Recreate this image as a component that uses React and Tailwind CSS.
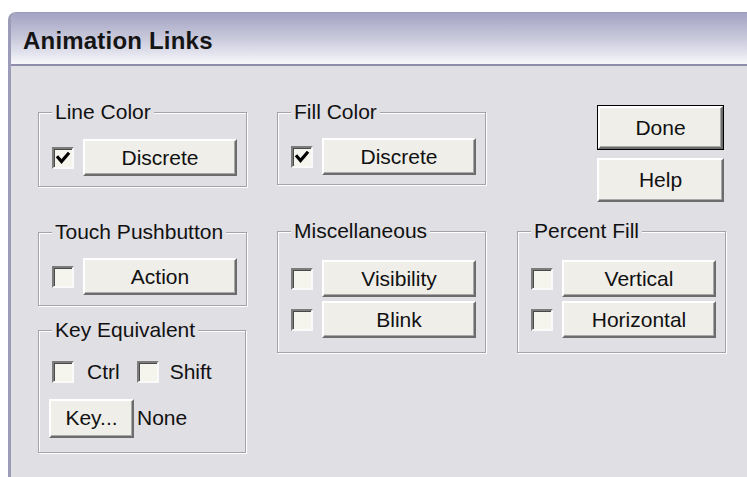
import React from "react";

const face = "bg-[#e0dfe4]";

// raised 3D push button, classic look
function PushButton({ children, className = "", isDefault = false }) {
  const inner = (
    <div className="flex h-full w-full items-center justify-center border-2 border-t-[#ffffff] border-l-[#ffffff] border-b-[#6c6c6c] border-r-[#6c6c6c] bg-[#efeee9] shadow-[inset_-1px_-1px_0_#a8a8a8]">
      {children}
    </div>
  );
  if (isDefault) {
    return <div className={"border-[1.5px] border-black " + className}>{inner}</div>;
  }
  return <div className={className}>{inner}</div>;
}

function CheckBox({ checked = false }) {
  return (
    <div className="flex h-[22px] w-[22px] shrink-0 items-center justify-center border-2 border-t-[#7c7c7c] border-l-[#7c7c7c] border-b-[#fafafa] border-r-[#fafafa] bg-[#f5f5ee] shadow-[inset_1px_1px_0_#4a4a4a]">
      {checked && (
        <svg width="16" height="16" viewBox="0 0 16 16">
          <path d="M3 7.5 L6.5 11.5 L13 4" fill="none" stroke="#000" strokeWidth="3.2" strokeLinecap="square" />
        </svg>
      )}
    </div>
  );
}

function Group({ label, className = "", children }) {
  return (
    <fieldset
      className={
        "w-[208px] border border-[#a3a3a8] pl-[13px] pr-[9px] shadow-[inset_1px_1px_0_#ffffff,1px_1px_0_#ffffff] " +
        className
      }
    >
      <legend className={"px-[3px] leading-[20px] " + face}>{label}</legend>
      {children}
    </fieldset>
  );
}

function Row({ checked, label, className = "" }) {
  return (
    <div className={"flex items-center gap-[9px] " + className}>
      <CheckBox checked={checked} />
      <PushButton className="h-[37px] w-[154px]">{label}</PushButton>
    </div>
  );
}

export default function App() {
  return (
    <div className="h-[477px] w-[747px] overflow-hidden bg-white pl-[8px] pt-[12px] font-['Liberation_Sans',Arial,sans-serif] text-[21px] text-[#111]">
      <div className={"h-full overflow-hidden rounded-tl-[8px] border-l-[3px] border-t border-[#9c9cb8] " + face}>
        {/* title bar */}
        <div className="flex h-[53px] items-center border-b-[2px] border-[#8e8eac] bg-gradient-to-b from-[#a3a3c3] via-[#c9c9dc] to-[#f7f7fb] pl-[12px] pt-[4px]">
          <span className="text-[24px] font-bold tracking-[0.2px] text-[#151515]">Animation Links</span>
        </div>

        {/* dialog body */}
        <div className="flex items-start pl-[27px] pt-[36px]">
          <div className="flex w-[208px] flex-col">
            <Group label="Line Color" className="pb-[10px] pt-[17px]">
              <Row checked label="Discrete" />
            </Group>
            <Group label="Touch Pushbutton" className="mt-[35px] pb-[10px] pt-[16px]">
              <Row label="Action" />
            </Group>
            <Group label="Key Equivalent" className="mt-[14px] pb-[14px] pt-[16px]">
              <div className="flex items-center">
                <CheckBox />
                <span className="ml-[13px]">Ctrl</span>
                <div className="ml-[17px]">
                  <CheckBox />
                </div>
                <span className="ml-[11px]">Shift</span>
              </div>
              <div className="mt-[11px] flex items-center">
                <PushButton className="-ml-[3px] h-[39px] w-[85px]">Key...</PushButton>
                <span className="ml-[3px]">None</span>
              </div>
            </Group>
          </div>

          <div className="ml-[31px] flex w-[208px] flex-col">
            <Group label="Fill Color" className="pb-[9px] pt-[16px]">
              <Row checked label="Discrete" />
            </Group>
            <Group label="Miscellaneous" className="mt-[36px] pb-[14px] pt-[19px]">
              <Row label="Visibility" />
              <Row label="Blink" className="mt-[4px]" />
            </Group>
          </div>

          <div className="ml-[32px] mt-[3px] flex w-[208px] flex-col">
            <div className="flex flex-col items-end pr-[1px]">
              <PushButton isDefault className="h-[45px] w-[127px]">Done</PushButton>
              <PushButton className="mt-[8px] h-[44px] w-[127px]">Help</PushButton>
            </div>
            <Group label="Percent Fill" className="mt-[19px] pb-[14px] pt-[19px]">
              <Row label="Vertical" />
              <Row label="Horizontal" className="mt-[4px]" />
            </Group>
          </div>
        </div>
      </div>
    </div>
  );
}
